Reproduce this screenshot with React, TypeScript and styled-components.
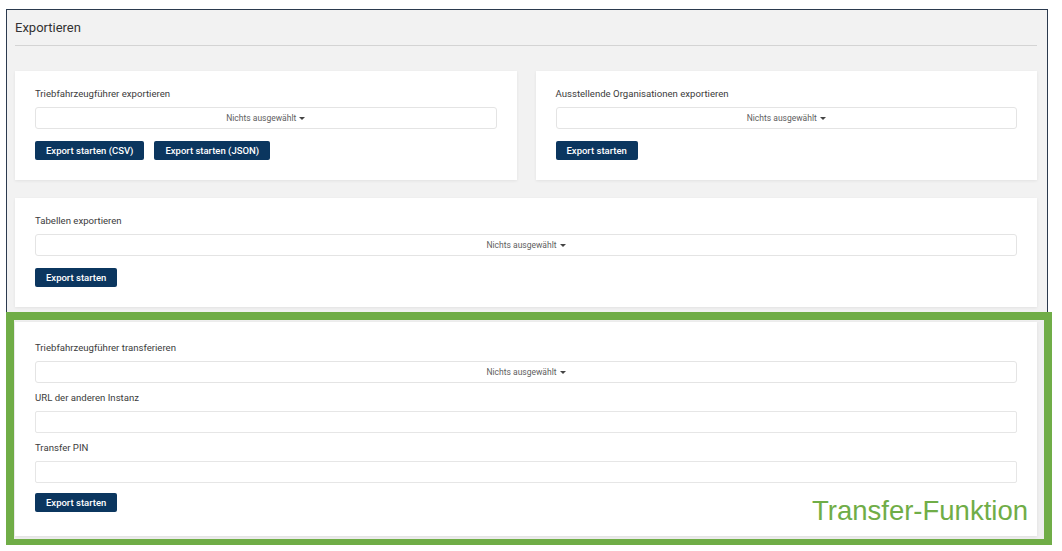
import React from "react";
import styled, { createGlobalStyle } from "styled-components";

const GlobalStyle = createGlobalStyle`
  html, body { margin: 0; padding: 0; background: #ffffff; }
  body { font-family: Roboto, "Liberation Sans", Arial, sans-serif; color: #333; }
  * { box-sizing: border-box; }
`;

const Frame = styled.div`
  margin: 9px 0 0 6px;
  width: 1042px;
  border: 1px solid #2b3a4e;
  border-bottom: none;
  background: #f2f2f2;
  padding: 0 10px 0 8px;
`;

const Header = styled.div`
  padding: 9px 0 8px;
  font-size: 13px;
  line-height: 18px;
  color: #333;
  border-bottom: 1px solid #d4d4d4;
`;

const Row = styled.div`
  display: grid;
  grid-template-columns: 1fr 1fr;
  column-gap: 19px;
  margin-top: 25px;
`;

const Card = styled.div<{ $mt?: number; $pt?: number; $pb?: number }>`
  background: #ffffff;
  box-shadow: 0 1px 3px rgba(0, 0, 0, 0.07);
  padding: ${(p) => p.$pt ?? 16}px 20px ${(p) => p.$pb ?? 20}px;
  margin-top: ${(p) => p.$mt ?? 0}px;
`;

const Group = styled.div`
  & + & { margin-top: 8px; }
`;

const Label = styled.div`
  font-size: 9.6px;
  line-height: 14px;
  color: #3c3c3c;
  margin-bottom: 6px;
`;

const Select = styled.div`
  height: 22px;
  border: 1px solid #e4e4e4;
  border-radius: 3px;
  display: flex;
  align-items: center;
  justify-content: center;
  font-size: 8.5px;
  color: #606060;
  background: #fff;
`;

const Caret = styled.span`
  display: inline-block;
  width: 0;
  height: 0;
  margin-left: 3px;
  border-top: 3px solid #444;
  border-left: 3px solid transparent;
  border-right: 3px solid transparent;
`;

const Input = styled.div`
  height: 22px;
  border: 1px solid #e6e6e6;
  border-radius: 2px;
  background: #fff;
`;

const ButtonRow = styled.div<{ $mt?: number }>`
  display: flex;
  gap: 10px;
  margin-top: ${(p) => p.$mt ?? 12}px;
`;

const Button = styled.button`
  height: 19px;
  padding: 0 11px;
  background: #0b365f;
  color: #ffffff;
  border: none;
  border-radius: 2px;
  font-family: Roboto, "Liberation Sans", Arial, sans-serif;
  font-size: 9.5px;
  font-weight: 500;
  line-height: 19px;
`;

const Highlight = styled.div`
  position: relative;
  margin: 5px -15px 0 -9px;
  border: 8px solid #70ad47;
  border-bottom-width: 6px;
  background: #efefef;
  padding: 2px 7px 3px 1px;
`;

const Annotation = styled.div`
  position: absolute;
  right: 16px;
  bottom: 13px;
  font-family: "Liberation Sans", Arial, sans-serif;
  font-size: 27.5px;
  line-height: 30px;
  color: #70ad47;
`;

const NothingSelected = () => (
  <Select>
    Nichts ausgewählt
    <Caret />
  </Select>
);

export default function App() {
  return (
    <>
      <GlobalStyle />
      <Frame>
        <Header>Exportieren</Header>
        <Row>
          <Card>
            <Group>
              <Label>Triebfahrzeugführer exportieren</Label>
              <NothingSelected />
            </Group>
            <ButtonRow>
              <Button>Export starten (CSV)</Button>
              <Button>Export starten (JSON)</Button>
            </ButtonRow>
          </Card>
          <Card>
            <Group>
              <Label>Ausstellende Organisationen exportieren</Label>
              <NothingSelected />
            </Group>
            <ButtonRow>
              <Button>Export starten</Button>
            </ButtonRow>
          </Card>
        </Row>
        <Card $mt={18}>
          <Group>
            <Label>Tabellen exportieren</Label>
            <NothingSelected />
          </Group>
          <ButtonRow>
            <Button>Export starten</Button>
          </ButtonRow>
        </Card>
        <Highlight>
          <Card $pt={19} $pb={24}>
            <Group>
              <Label>Triebfahrzeugführer transferieren</Label>
              <NothingSelected />
            </Group>
            <Group>
              <Label>URL der anderen Instanz</Label>
              <Input />
            </Group>
            <Group>
              <Label>Transfer PIN</Label>
              <Input />
            </Group>
            <ButtonRow $mt={10}>
              <Button>Export starten</Button>
            </ButtonRow>
          </Card>
          <Annotation>Transfer-Funktion</Annotation>
        </Highlight>
      </Frame>
    </>
  );
}
